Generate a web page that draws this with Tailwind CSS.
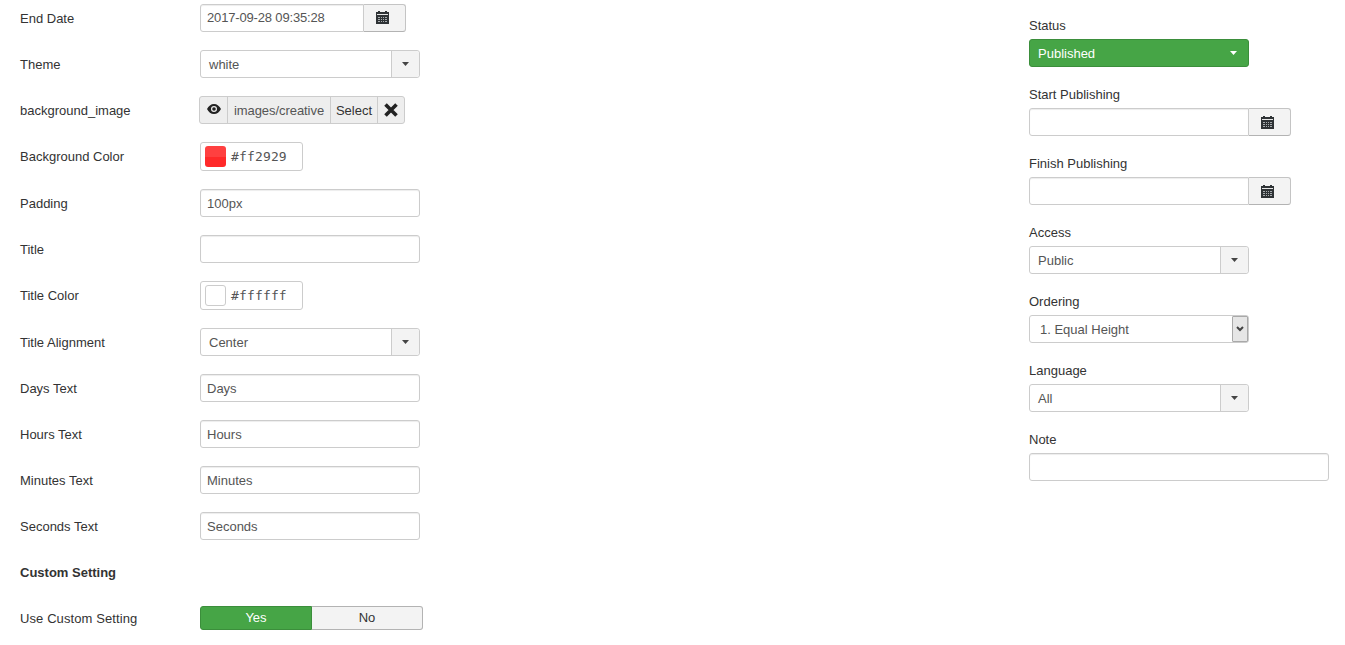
<!DOCTYPE html>
<html lang="en">
<head>
<meta charset="UTF-8" />
<title>Countdown module</title>
<script src="https://cdn.jsdelivr.net/npm/@tailwindcss/browser@4"></script>
</head>
<body class="bg-white text-[#333] text-[13px] font-['Liberation_Sans',Arial,sans-serif] overflow-hidden">
<svg class="hidden">
  <symbol id="cal" viewBox="0 0 13 13">
    <path fill="#2f3336" d="M0 1h2V0h2v1h5V0h2v1h2v12H0z"/>
    <path fill="#e8e8e8" d="M1 3h11v1H1z"/>
    <path fill="#a9adb0" d="M2 6h9v1H2zM2 8h9v1H2zM2 10h9v1H2z"/>
    <path fill="#2f3336" d="M4 6h1v5H4zM6 6h1v5H6zM8 6h1v5H8z"/>
  </symbol>
  <symbol id="caret" viewBox="0 0 7 4"><path fill="currentColor" d="M0 0h7L3.500 4z"/></symbol>
</svg>

<div class="flex h-[645px] w-[1345px]">
  <!-- Left column -->
  <div class="w-[1029px] shrink-0 pl-5 pt-1">
    <div class="flex items-center h-7 mb-[18px]">
      <label class="w-[180px] pt-[2px]">End Date</label>
      <div class="flex w-[206px] h-7">
        <input value="2017-09-28 09:35:28" class="w-[164px] border border-[#ccc] rounded-l-[3px] px-[6px] tracking-[-0.16px] text-[#555] shadow-[inset_0_1px_1px_rgba(0,0,0,0.075)] outline-none" />
        <span class="w-[42px] pr-1 flex items-center justify-center bg-[#f3f3f3] border border-l-0 border-[#c4c4c4] border-b-[#b3b3b3] rounded-r-[3px]"><svg class="w-[13px] h-[13px] -mt-[2px]"><use href="#cal"/></svg></span>
      </div>
    </div>
    <div class="flex items-center h-7 mb-[18px]">
      <label class="w-[180px] pt-[2px]">Theme</label>
      <div class="flex w-[220px] h-7 border border-[#ccc] rounded-[3px]">
        <span class="flex-1 pl-2 leading-[28px] text-[#555]">white</span>
        <span class="w-7 flex items-center justify-center bg-[#f3f3f3] border-l border-[#ccc] rounded-r-[3px] text-[#444]"><svg class="w-[7px] h-1"><use href="#caret"/></svg></span>
      </div>
    </div>
    <div class="flex items-center h-7 mb-[18px]">
      <label class="w-[179px] pt-[2px]">background_image</label>
      <div class="flex h-7 w-[206px] bg-[#eee] border border-[#ccc] rounded-[3px]">
        <span class="w-[28px] flex items-center justify-center border-r border-[#ccc]">
          <svg class="w-[14px] h-[10px] -mt-[2px]" viewBox="0 0 14 10"><path fill="#222" fill-rule="evenodd" d="M7 0c3 0 5.500 2 7 5-1.500 3-4 5-7 5S1.500 8 0 5c1.500-3 4-5 7-5zm0 2a3 3 0 100 6 3 3 0 000-6z"/><circle cx="7" cy="5" r="1.800" fill="#222"/></svg>
        </span>
        <span class="w-[103px] text-center leading-[28px] tracking-[-0.06px] text-[#555] border-r border-[#ccc]">images/creative</span>
        <span class="w-[47px] text-center leading-[28px] border-r border-[#ccc]">Select</span>
        <span class="flex-1 flex items-center justify-center"><svg class="w-[14px] h-[14px]" viewBox="0 0 14 14"><path stroke="#222" stroke-width="3.600" d="M1.500 1.500l11 11M12.500 1.500l-11 11"/></svg></span>
      </div>
    </div>
    <div class="flex items-center h-[29px] mb-[18px]">
      <label class="w-[180px]">Background Color</label>
      <div class="flex items-center w-[103px] h-[29px] border border-[#ccc] rounded-[3px] pl-1">
        <span class="w-[21px] h-[21px] rounded-[3px] bg-[linear-gradient(#ff4040_50%,#ff2929_50%)]"></span>
        <span class="ml-[5px] font-['DejaVu_Sans_Mono',monospace] text-[13px] tracking-[0.15px] text-[#555]">#ff2929</span>
      </div>
    </div>
    <div class="flex items-center h-7 mb-[18px]">
      <label class="w-[180px] pt-[2px]">Padding</label>
      <input value="100px" class="w-[220px] h-7 border border-[#ccc] rounded-[3px] px-[6px] text-[#555] shadow-[inset_0_1px_1px_rgba(0,0,0,0.075)] outline-none" />
    </div>
    <div class="flex items-center h-7 mb-[18px]">
      <label class="w-[180px] pt-[2px]">Title</label>
      <input class="w-[220px] h-7 border border-[#ccc] rounded-[3px] px-[6px] text-[#555] shadow-[inset_0_1px_1px_rgba(0,0,0,0.075)] outline-none" />
    </div>
    <div class="flex items-center h-[29px] mb-[18px]">
      <label class="w-[180px]">Title Color</label>
      <div class="flex items-center w-[103px] h-[29px] border border-[#ccc] rounded-[3px] pl-1">
        <span class="w-[21px] h-[21px] rounded-[3px] border border-[#ccc] bg-white"></span>
        <span class="ml-[5px] font-['DejaVu_Sans_Mono',monospace] text-[13px] tracking-[0.15px] text-[#555]">#ffffff</span>
      </div>
    </div>
    <div class="flex items-center h-7 mb-[18px]">
      <label class="w-[180px] pt-[2px]">Title Alignment</label>
      <div class="flex w-[220px] h-7 border border-[#ccc] rounded-[3px]">
        <span class="flex-1 pl-2 leading-[28px] text-[#555]">Center</span>
        <span class="w-7 flex items-center justify-center bg-[#f3f3f3] border-l border-[#ccc] rounded-r-[3px] text-[#444]"><svg class="w-[7px] h-1"><use href="#caret"/></svg></span>
      </div>
    </div>
    <div class="flex items-center h-7 mb-[18px]">
      <label class="w-[180px] pt-[2px]">Days Text</label>
      <input value="Days" class="w-[220px] h-7 border border-[#ccc] rounded-[3px] px-[6px] text-[#555] shadow-[inset_0_1px_1px_rgba(0,0,0,0.075)] outline-none" />
    </div>
    <div class="flex items-center h-7 mb-[18px]">
      <label class="w-[180px] pt-[2px]">Hours Text</label>
      <input value="Hours" class="w-[220px] h-7 border border-[#ccc] rounded-[3px] px-[6px] text-[#555] shadow-[inset_0_1px_1px_rgba(0,0,0,0.075)] outline-none" />
    </div>
    <div class="flex items-center h-7 mb-[18px]">
      <label class="w-[180px] pt-[2px]">Minutes Text</label>
      <input value="Minutes" class="w-[220px] h-7 border border-[#ccc] rounded-[3px] px-[6px] text-[#555] shadow-[inset_0_1px_1px_rgba(0,0,0,0.075)] outline-none" />
    </div>
    <div class="flex items-center h-7 mb-[18px]">
      <label class="w-[180px] pt-[2px]">Seconds Text</label>
      <input value="Seconds" class="w-[220px] h-7 border border-[#ccc] rounded-[3px] px-[6px] text-[#555] shadow-[inset_0_1px_1px_rgba(0,0,0,0.075)] outline-none" />
    </div>
    <div class="flex items-center h-7 mb-[18px]">
      <label class="font-bold pt-[2px]">Custom Setting</label>
    </div>
    <div class="flex items-center h-7">
      <label class="w-[180px] pt-[2px] tracking-[0.1px]">Use Custom Setting</label>
      <div class="flex w-[223px] h-6">
        <span class="w-[112px] text-center leading-[22px] text-white bg-[#46a546] border border-[#3b8e3b] rounded-l-[3px]">Yes</span>
        <span class="flex-1 text-center leading-[22px] bg-[#f3f3f3] border border-l-0 border-[#b3b3b3] rounded-r-[3px]">No</span>
      </div>
    </div>
  </div>

  <!-- Right column -->
  <div class="flex-1 pt-4">
    <div class="mb-[18px]">
      <label class="block h-[18px] leading-[20px] mb-[5px]">Status</label>
      <div class="flex items-center justify-between w-[220px] h-7 pl-2 pr-[11px] bg-[#46a546] border border-[#3b8e3b] rounded-[3px] text-white">
        <span class="pt-[2px]">Published</span>
        <svg class="w-[7px] h-1"><use href="#caret"/></svg>
      </div>
    </div>
    <div class="mb-[18px]">
      <label class="block h-[18px] leading-[20px] mb-[5px]">Start Publishing</label>
      <div class="flex w-[262px] h-7">
        <input class="w-[220px] border border-[#ccc] rounded-l-[3px] shadow-[inset_0_1px_1px_rgba(0,0,0,0.075)] outline-none" />
        <span class="w-[42px] pr-1 flex items-center justify-center bg-[#f3f3f3] border border-l-0 border-[#c4c4c4] border-b-[#b3b3b3] rounded-r-[3px]"><svg class="w-[13px] h-[13px]"><use href="#cal"/></svg></span>
      </div>
    </div>
    <div class="mb-[18px]">
      <label class="block h-[18px] leading-[20px] mb-[5px]">Finish Publishing</label>
      <div class="flex w-[262px] h-7">
        <input class="w-[220px] border border-[#ccc] rounded-l-[3px] shadow-[inset_0_1px_1px_rgba(0,0,0,0.075)] outline-none" />
        <span class="w-[42px] pr-1 flex items-center justify-center bg-[#f3f3f3] border border-l-0 border-[#c4c4c4] border-b-[#b3b3b3] rounded-r-[3px]"><svg class="w-[13px] h-[13px]"><use href="#cal"/></svg></span>
      </div>
    </div>
    <div class="mb-[18px]">
      <label class="block h-[18px] leading-[20px] mb-[5px]">Access</label>
      <div class="flex w-[220px] h-7 border border-[#ccc] rounded-[3px]">
        <span class="flex-1 pl-2 leading-[28px] text-[#555]">Public</span>
        <span class="w-7 flex items-center justify-center bg-[#f3f3f3] border-l border-[#ccc] rounded-r-[3px] text-[#444]"><svg class="w-[7px] h-1"><use href="#caret"/></svg></span>
      </div>
    </div>
    <div class="mb-[18px]">
      <label class="block h-[18px] leading-[20px] mb-[5px]">Ordering</label>
      <div class="flex w-[220px] h-7 border border-[#ccc] rounded-[3px]">
        <span class="flex-1 pl-[10px] leading-[28px] text-[#555]">1. Equal Height</span>
        <span class="w-4 flex items-center justify-center bg-[#e6e6e6] border border-[#a9a9a9] rounded-[1px]">
          <svg class="w-2 h-[6px]" viewBox="0 0 8 6"><path fill="none" stroke="#444" stroke-width="2" d="M1 1l3 3 3-3"/></svg>
        </span>
      </div>
    </div>
    <div class="mb-[18px]">
      <label class="block h-[18px] leading-[20px] mb-[5px]">Language</label>
      <div class="flex w-[220px] h-7 border border-[#ccc] rounded-[3px]">
        <span class="flex-1 pl-2 leading-[28px] text-[#555]">All</span>
        <span class="w-7 flex items-center justify-center bg-[#f3f3f3] border-l border-[#ccc] rounded-r-[3px] text-[#444]"><svg class="w-[7px] h-1"><use href="#caret"/></svg></span>
      </div>
    </div>
    <div>
      <label class="block h-[18px] leading-[20px] mb-[5px]">Note</label>
      <input class="block w-[300px] h-7 border border-[#ccc] rounded-[3px] shadow-[inset_0_1px_1px_rgba(0,0,0,0.075)] outline-none" />
    </div>
  </div>
</div>
</body>
</html>
